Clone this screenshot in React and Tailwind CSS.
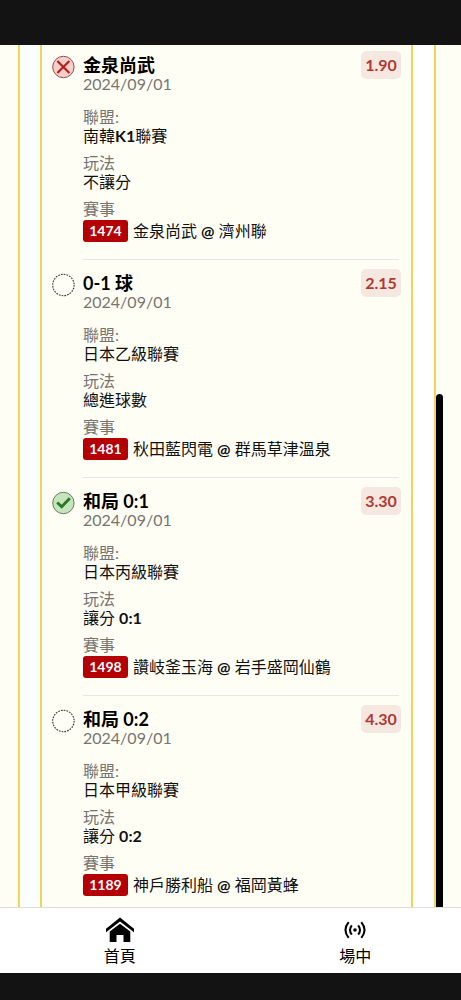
import React from 'react';
import clsx from 'clsx';

const picks = [
    { id: '1474', title: '金泉尚武', date: '2024/09/01', league: '南韓K1聯賽', play: '不讓分', match: '金泉尚武 @ 濟州聯', odds: '1.90', status: 'lost' },
    { id: '1481', title: '0-1 球', date: '2024/09/01', league: '日本乙級聯賽', play: '總進球數', match: '秋田藍閃電 @ 群馬草津溫泉', odds: '2.15', status: 'pending' },
    { id: '1498', title: '和局 0:1', date: '2024/09/01', league: '日本丙級聯賽', play: '讓分 0:1', match: '讚岐釜玉海 @ 岩手盛岡仙鶴', odds: '3.30', status: 'won' },
    { id: '1189', title: '和局 0:2', date: '2024/09/01', league: '日本甲級聯賽', play: '讓分 0:2', match: '神戶勝利船 @ 福岡黃蜂', odds: '4.30', status: 'pending' },
];

const StatusIcon = ({ status }) => (
    <svg className="size-6 shrink-0" viewBox="0 0 24 24" fill="none">
        {status === 'lost' && (
            <>
                <circle cx="12.4" cy="12" r="10.7" fill="#f9cfcb" stroke="#8d4f4c" />
                <path d="M6.4 6 18.4 18M18.4 6 6.4 18" stroke="#b3201a" strokeWidth="2.2" />
            </>
        )}
        {status === 'won' && (
            <>
                <circle cx="12.4" cy="12" r="10.7" fill="#c5e6bd" stroke="#66805f" />
                <path d="M6.2 11.5 10.7 15.7 18.8 7.2" stroke="#2c7626" strokeWidth="2.8" />
            </>
        )}
        {status === 'pending' && (
            <circle cx="12.4" cy="12" r="10.7" stroke="#333" strokeWidth="1.1" strokeDasharray="1.7 1.1" />
        )}
    </svg>
);

// latin letters and digits are set bold inside the regular CJK text
const MixedText = ({ text }) => (
    <span>
        {text.split(/([\w:@]+)/).map((part, i) => (i % 2 ? <b key={i} className="font-bold">{part}</b> : part))}
    </span>
);

const Field = ({ label, children }) => (
    <div>
        <dt className="leading-[18px] text-[#777572]">{label}</dt>
        <dd className="leading-5">{children}</dd>
    </div>
);

const PickItem = ({ pick }) => (
    <li className="group flex gap-2 pt-[13px] first:pt-[10px]">
        <StatusIcon status={pick.status} />
        <div className="relative min-w-0 flex-1">
            <h3 className="text-lg leading-5 font-bold text-black">{pick.title}</h3>
            <time className="block leading-[18px] text-[#777572]">{pick.date}</time>
            <span className="absolute -top-1 right-0 flex h-7 w-10 items-center justify-center rounded-[5px] bg-[#f6e7e0] font-bold text-[#b03a30]">
                {pick.odds}
            </span>
            <dl className="mt-[15px] mr-[2px] flex flex-col gap-2 border-b border-[#e9e7e2] pb-[15px] group-last:border-0">
                <Field label="聯盟:"><MixedText text={pick.league} /></Field>
                <Field label="玩法"><MixedText text={pick.play} /></Field>
                <Field label="賽事">
                    <span className="flex items-center gap-[5px] py-[2px] whitespace-nowrap">
                        <span className="flex h-[22px] w-[45px] items-center justify-center rounded-[3px] bg-[#b40005] text-sm font-bold text-white">
                            {pick.id}
                        </span>
                        <MixedText text={pick.match} />
                    </span>
                </Field>
            </dl>
        </div>
    </li>
);

const HomeIcon = () => (
    <svg className="h-[26px] w-7" viewBox="0 0 28 26" fill="currentColor">
        <path d="M14 .5 0 11.8V15.2L14 4.6 28 15.2V11.8Z" />
        <path d="M14 6.8 3.7 14.6V25H10.5V18H17.5V25H24.3V14.6Z" />
    </svg>
);

const LiveIcon = () => (
    <svg className="h-[26px] w-[22px]" viewBox="0 0 22 26" fill="none" stroke="currentColor" strokeWidth="2">
        <circle cx="11" cy="13" r="1.8" fill="currentColor" stroke="none" />
        <path d="M7.8 8.3Q4.2 13 7.8 17.7M14.2 8.3Q17.8 13 14.2 17.7M4.7 5.2Q-1.8 13 4.7 20.8M17.3 5.2Q23.8 13 17.3 20.8" />
    </svg>
);

const NavLink = ({ icon, label, className }) => (
    <a href="#" className={clsx('flex flex-1 flex-col items-center pt-[9px] text-black', className)}>
        {icon}
        <span className="mt-[3px] leading-5">{label}</span>
    </a>
);

export default function App() {
    return (
        <div className="flex h-screen flex-col overflow-hidden bg-[#131313] font-['Lato','Noto_Sans_CJK_TC',sans-serif] text-base text-[#111]">
            <div className="h-[45px] shrink-0" />
            <main className="relative min-h-0 flex-1 overflow-hidden bg-[#fffef5] pr-[25px] pl-[18px]">
                <div className="border-x-2 border-[#f1d655] bg-white pr-[21px]">
                    <div className="bg-[#fafefe] pl-5">
                        <ul className="border-x-2 border-[#f1d655] bg-[#fffef5] pr-[10px] pl-[9px]">
                            {picks.map((pick) => (
                                <PickItem key={pick.id} pick={pick} />
                            ))}
                        </ul>
                    </div>
                </div>
                {/* scroll thumb */}
                <div className="absolute top-[349px] right-[18px] bottom-0 w-[7px] rounded-t-full bg-black" />
            </main>
            <nav className="flex h-[66px] shrink-0 border-t border-[#ddd] bg-white">
                <NavLink icon={<HomeIcon />} label="首頁" className="pl-[14px]" />
                <NavLink icon={<LiveIcon />} label="場中" className="pl-6" />
            </nav>
            <div className="h-[27px] shrink-0" />
        </div>
    );
}
